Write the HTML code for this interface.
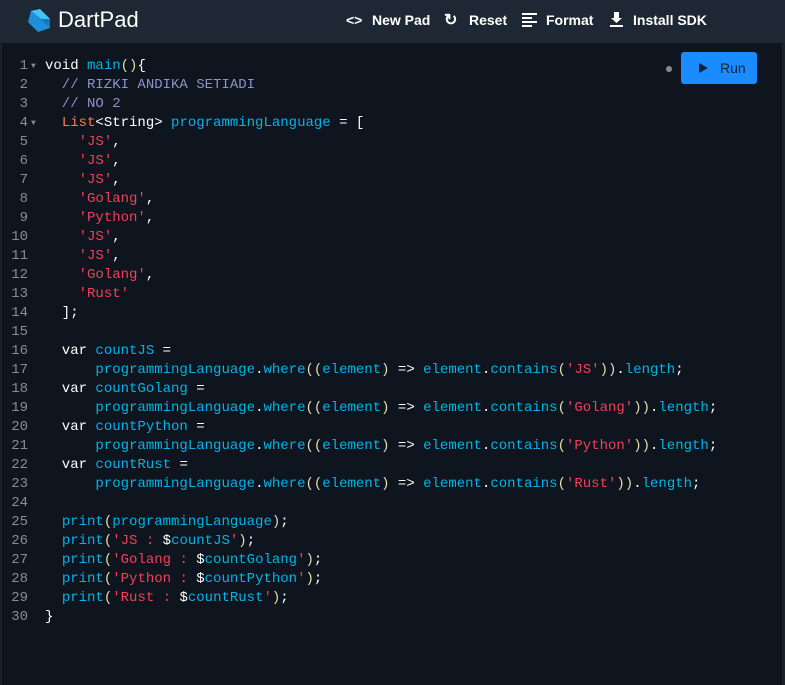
<!DOCTYPE html>
<html><head><meta charset="utf-8"><style>
*{margin:0;padding:0;box-sizing:border-box}
body{width:785px;height:685px;background:#0f151e;overflow:hidden;font-family:"Liberation Sans",sans-serif;position:relative}
.hdr{position:absolute;left:0;top:0;width:785px;height:43px;background:#1e2834}
.logo{position:absolute;left:58px;top:7px;font-size:22px;color:#fff;}
.nav{position:absolute;top:12px;color:#fff;font-size:14px;font-weight:bold;}
.ed{position:absolute;left:0;top:43px;width:785px;height:642px;background:#0f151e;border-left:2px solid #1a222c;border-right:3px solid #1a222c}
.code{position:absolute;left:0;top:57px;font-family:"Liberation Mono",monospace;font-size:14px;line-height:19px;color:#fff}
.ln{position:absolute;left:0;width:28px;text-align:right;color:#8c8c8c}
.l{white-space:pre;height:19px;position:relative}
.t{position:absolute;left:45px;white-space:pre}
.f{position:absolute;left:31px;font-size:8px;color:#888;top:0}
.c{color:#00b4e8}.s{color:#f0405a}.k{color:#ff7b54}.m{color:#8a94c8}.p{color:#e8dcb0}
.run{position:absolute;left:681px;top:52px;width:76px;height:32px;background:#1a8cff;border-radius:3px;color:#10213a;font-size:14px}
</style></head><body>
<div class="hdr">
<svg style="position:absolute;left:26px;top:8px" width="25" height="25" viewBox="0 0 25 25"><path d="M5 3 L14 1 L24 11 L24 20 L12 24 L2 14 Z" fill="#1e8fd8"/><path d="M5 3 L14 1 L24 11 L15 11 Z" fill="#41c4f5"/><path d="M5 3 L15 11 L24 11 L24 20 Z" fill="#0d6bb0" opacity=".6"/></svg>
<div class="logo">DartPad</div>
<div class="nav" style="left:346px">&lt;&gt;</div><div class="nav" style="left:372px">New Pad</div>
<div class="nav" style="left:444px;font-size:16px;top:10px">↻</div><div class="nav" style="left:469px">Reset</div>
<svg style="position:absolute;left:522px;top:13px" width="15" height="15"><g fill="#fff"><rect y="0" width="15" height="2"/><rect y="4" width="10" height="2"/><rect y="8" width="15" height="2"/><rect y="12" width="10" height="2"/></g></svg><div class="nav" style="left:546px">Format</div>
<svg style="position:absolute;left:610px;top:12px" width="13" height="15"><path d="M4 0h5v6h3l-5.5 5L1 6h3z M0 13h13v2H0z" fill="#fff"/></svg><div class="nav" style="left:633px">Install SDK</div>
</div>
<div class="ed"></div>
<div style="position:absolute;left:666px;top:66px;width:6px;height:6px;border-radius:3px;background:#8a8a8a"></div>
<div class="run"><svg style="position:absolute;left:18px;top:11px" width="9" height="10"><path d="M0 0L9 5L0 10z" fill="#10213a"/></svg><span style="position:absolute;left:39px;top:8px">Run</span></div>
<div class="code">
<div class="l"><span class="ln">1</span><span class="f">▼</span><span class="t">void <span class="c">main</span><span class="p">()</span>{</span></div>
<div class="l"><span class="ln">2</span><span class="t"><span class="m">  // RIZKI ANDIKA SETIADI</span></span></div>
<div class="l"><span class="ln">3</span><span class="t"><span class="m">  // NO 2</span></span></div>
<div class="l"><span class="ln">4</span><span class="f">▼</span><span class="t">  <span class="k">List</span>&lt;String&gt; <span class="c">programmingLanguage</span> = [</span></div>
<div class="l"><span class="ln">5</span><span class="t">    <span class="s">'JS'</span>,</span></div>
<div class="l"><span class="ln">6</span><span class="t">    <span class="s">'JS'</span>,</span></div>
<div class="l"><span class="ln">7</span><span class="t">    <span class="s">'JS'</span>,</span></div>
<div class="l"><span class="ln">8</span><span class="t">    <span class="s">'Golang'</span>,</span></div>
<div class="l"><span class="ln">9</span><span class="t">    <span class="s">'Python'</span>,</span></div>
<div class="l"><span class="ln">10</span><span class="t">    <span class="s">'JS'</span>,</span></div>
<div class="l"><span class="ln">11</span><span class="t">    <span class="s">'JS'</span>,</span></div>
<div class="l"><span class="ln">12</span><span class="t">    <span class="s">'Golang'</span>,</span></div>
<div class="l"><span class="ln">13</span><span class="t">    <span class="s">'Rust'</span></span></div>
<div class="l"><span class="ln">14</span><span class="t">  ];</span></div>
<div class="l"><span class="ln">15</span></div>
<div class="l"><span class="ln">16</span><span class="t">  var <span class="c">countJS</span> =</span></div>
<div class="l"><span class="ln">17</span><span class="t">      <span class="c">programmingLanguage</span>.<span class="c">where</span><span class="p">((</span><span class="c">element</span><span class="p">)</span> =&gt; <span class="c">element</span>.<span class="c">contains</span><span class="p">(</span><span class="s">'JS'</span><span class="p">))</span>.<span class="c">length</span>;</span></div>
<div class="l"><span class="ln">18</span><span class="t">  var <span class="c">countGolang</span> =</span></div>
<div class="l"><span class="ln">19</span><span class="t">      <span class="c">programmingLanguage</span>.<span class="c">where</span><span class="p">((</span><span class="c">element</span><span class="p">)</span> =&gt; <span class="c">element</span>.<span class="c">contains</span><span class="p">(</span><span class="s">'Golang'</span><span class="p">))</span>.<span class="c">length</span>;</span></div>
<div class="l"><span class="ln">20</span><span class="t">  var <span class="c">countPython</span> =</span></div>
<div class="l"><span class="ln">21</span><span class="t">      <span class="c">programmingLanguage</span>.<span class="c">where</span><span class="p">((</span><span class="c">element</span><span class="p">)</span> =&gt; <span class="c">element</span>.<span class="c">contains</span><span class="p">(</span><span class="s">'Python'</span><span class="p">))</span>.<span class="c">length</span>;</span></div>
<div class="l"><span class="ln">22</span><span class="t">  var <span class="c">countRust</span> =</span></div>
<div class="l"><span class="ln">23</span><span class="t">      <span class="c">programmingLanguage</span>.<span class="c">where</span><span class="p">((</span><span class="c">element</span><span class="p">)</span> =&gt; <span class="c">element</span>.<span class="c">contains</span><span class="p">(</span><span class="s">'Rust'</span><span class="p">))</span>.<span class="c">length</span>;</span></div>
<div class="l"><span class="ln">24</span></div>
<div class="l"><span class="ln">25</span><span class="t">  <span class="c">print</span><span class="p">(</span><span class="c">programmingLanguage</span><span class="p">)</span>;</span></div>
<div class="l"><span class="ln">26</span><span class="t">  <span class="c">print</span><span class="p">(</span><span class="s">'JS : </span>$<span class="c">countJS</span><span class="s">'</span><span class="p">)</span>;</span></div>
<div class="l"><span class="ln">27</span><span class="t">  <span class="c">print</span><span class="p">(</span><span class="s">'Golang : </span>$<span class="c">countGolang</span><span class="s">'</span><span class="p">)</span>;</span></div>
<div class="l"><span class="ln">28</span><span class="t">  <span class="c">print</span><span class="p">(</span><span class="s">'Python : </span>$<span class="c">countPython</span><span class="s">'</span><span class="p">)</span>;</span></div>
<div class="l"><span class="ln">29</span><span class="t">  <span class="c">print</span><span class="p">(</span><span class="s">'Rust : </span>$<span class="c">countRust</span><span class="s">'</span><span class="p">)</span>;</span></div>
<div class="l"><span class="ln">30</span><span class="t">}</span></div>
</div>
</body></html>
